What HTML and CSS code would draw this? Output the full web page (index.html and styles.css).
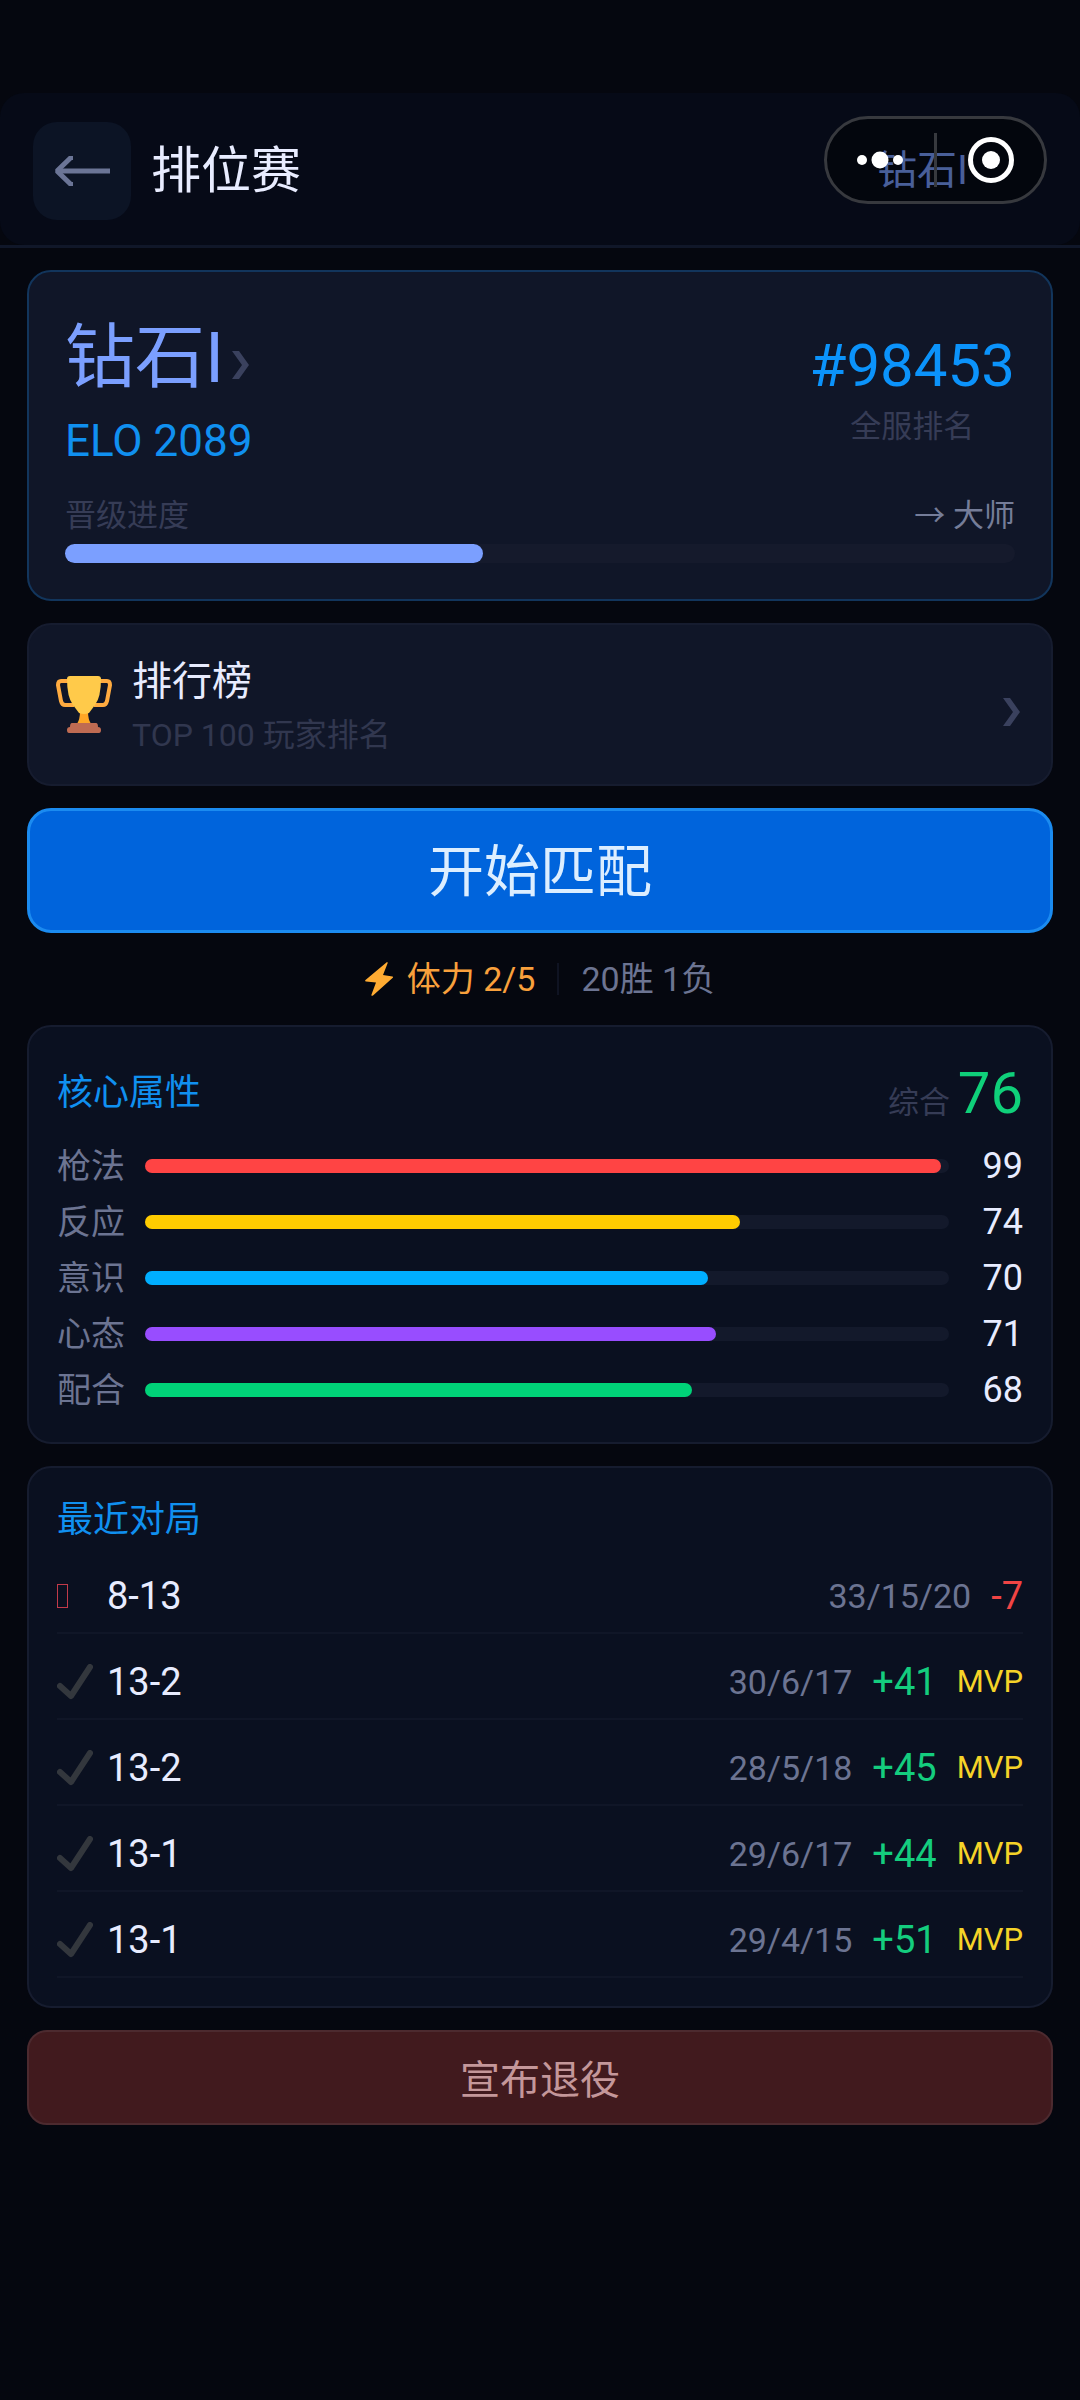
FILE: index.html
```html
<!DOCTYPE html>
<html lang="zh-CN">
<head>
    <meta charset="UTF-8">
    <meta name="viewport" content="width=device-width, initial-scale=1.0">
    <title>排位赛</title>
    <link rel="stylesheet" href="styles.css">
</head>
<body>
    <header class="header">
        <div class="header-inner">
            <button class="back" type="button" aria-label="返回">
                <svg width="58" height="30" viewBox="0 0 58 30" fill="none" stroke="currentColor" stroke-width="5">
                    <path d="M4 15H57"/>
                    <path d="M20 1.5H18L4 15L18 28.5H20" stroke-linejoin="bevel"/>
                </svg>
            </button>
            <h1 class="title">排位赛</h1>
            <span class="header-rank">钻石I</span>
        </div>
        <!-- mini program capsule, floats over the header -->
        <div class="capsule">
            <button type="button" class="capsule-btn" aria-label="更多">
                <svg width="48" height="18" viewBox="0 0 48 18" fill="#fff">
                    <circle cx="5" cy="9" r="5"/>
                    <circle cx="23" cy="9" r="8.5"/>
                    <circle cx="41" cy="9" r="5"/>
                </svg>
            </button>
            <span class="capsule-line"></span>
            <button type="button" class="capsule-btn" aria-label="关闭">
                <svg width="46" height="46" viewBox="0 0 46 46">
                    <circle cx="23" cy="23" r="20.5" fill="none" stroke="#fff" stroke-width="5"/>
                    <circle cx="23" cy="23" r="9" fill="#fff"/>
                </svg>
            </button>
        </div>
    </header>

    <main class="main">
        <section class="card rank-card">
            <div class="rank-top">
                <div>
                    <a href="#" class="rank-name">钻石I
                        <svg class="chevron" width="18" height="28" viewBox="0 0 18 28"><path d="M0 0H7L17 14L7 28H0L10 14Z"/></svg>
                    </a>
                    <div class="elo">ELO 2089</div>
                </div>
                <div class="rank-place">
                    <div class="place-num">#98453</div>
                    <div class="place-label">全服排名</div>
                </div>
            </div>
            <div class="progress-head">
                <span>晋级进度</span>
                <span class="next">→ 大师</span>
            </div>
            <div class="progress"><div class="progress-fill" style="width: 44%"></div></div>
        </section>

        <a href="#" class="card board">
            <svg class="trophy" width="56" height="57" viewBox="0 0 56 57">
                <path d="M13 5H5Q2 5 2 9L5 25Q6 29 9 29H18M43 5H51Q54 5 54 9L51 25Q50 29 47 29H38" fill="none" stroke="#ffab40" stroke-width="4"/>
                <path d="M24 36H32Q32 43 35 48H21Q24 43 24 36Z" fill="#ffa726"/>
                <path d="M14 0H42Q45 0 45 3Q45 21 39 29L33 37Q28 39 23 37L17 29Q11 21 11 3Q11 0 14 0Z" fill="#ffca4a"/>
                <path d="M16 47H40Q42 47 42 51Q45 51 45 54Q45 57 43 57H13Q11 57 11 54Q11 51 14 51Q14 47 16 47Z" fill="#bf6b52"/>
            </svg>
            <div class="board-text">
                <div class="board-title">排行榜</div>
                <div class="board-sub">TOP 100 玩家排名</div>
            </div>
            <svg class="chevron" width="18" height="28" viewBox="0 0 18 28"><path d="M0 0H7L17 14L7 28H0L10 14Z"/></svg>
        </a>

        <button type="button" class="start">开始匹配</button>

        <div class="status">
            <span class="energy">
                <svg width="28" height="34" viewBox="0 0 28 34" fill="#ffab32"><path d="M22 0Q23 0 22.500 1.500L18 13L27.500 14.500Q28.500 15 27.500 16L8 33.500Q6 34.500 6.500 32.500L11 20.500L1 19.500Q-.5 19 .5 18Z"/></svg>
                体力 2/5
            </span>
            <span class="status-line"></span>
            <span class="record">20胜 1负</span>
        </div>

        <section class="card panel">
            <div class="panel-head">
                <h2 class="panel-title">核心属性</h2>
                <div class="overall">综合 <span class="overall-num">76</span></div>
            </div>
            <div class="stats">
                <div class="stat">
                    <span class="stat-name">枪法</span>
                    <div class="bar"><div class="bar-fill red" style="width: 99%"></div></div>
                    <span class="stat-value">99</span>
                </div>
                <div class="stat">
                    <span class="stat-name">反应</span>
                    <div class="bar"><div class="bar-fill yellow" style="width: 74%"></div></div>
                    <span class="stat-value">74</span>
                </div>
                <div class="stat">
                    <span class="stat-name">意识</span>
                    <div class="bar"><div class="bar-fill blue" style="width: 70%"></div></div>
                    <span class="stat-value">70</span>
                </div>
                <div class="stat">
                    <span class="stat-name">心态</span>
                    <div class="bar"><div class="bar-fill purple" style="width: 71%"></div></div>
                    <span class="stat-value">71</span>
                </div>
                <div class="stat">
                    <span class="stat-name">配合</span>
                    <div class="bar"><div class="bar-fill green" style="width: 68%"></div></div>
                    <span class="stat-value">68</span>
                </div>
            </div>
        </section>

        <section class="card panel">
            <h2 class="panel-title matches-title">最近对局</h2>
            <ul class="matches">
                <li class="match">
                    <span class="result"><span class="lose-mark"></span></span>
                    <span class="score">8-13</span>
                    <span class="kda">33/15/20</span>
                    <span class="delta down">-7</span>
                </li>
                <li class="match">
                    <span class="result"><svg width="36" height="36" viewBox="0 0 36 36"><path class="win-mark" d="M3 22L14 32L33 3"/></svg></span>
                    <span class="score">13-2</span>
                    <span class="kda">30/6/17</span>
                    <span class="delta up">+41</span>
                    <span class="mvp">MVP</span>
                </li>
                <li class="match">
                    <span class="result"><svg width="36" height="36" viewBox="0 0 36 36"><path class="win-mark" d="M3 22L14 32L33 3"/></svg></span>
                    <span class="score">13-2</span>
                    <span class="kda">28/5/18</span>
                    <span class="delta up">+45</span>
                    <span class="mvp">MVP</span>
                </li>
                <li class="match">
                    <span class="result"><svg width="36" height="36" viewBox="0 0 36 36"><path class="win-mark" d="M3 22L14 32L33 3"/></svg></span>
                    <span class="score">13-1</span>
                    <span class="kda">29/6/17</span>
                    <span class="delta up">+44</span>
                    <span class="mvp">MVP</span>
                </li>
                <li class="match">
                    <span class="result"><svg width="36" height="36" viewBox="0 0 36 36"><path class="win-mark" d="M3 22L14 32L33 3"/></svg></span>
                    <span class="score">13-1</span>
                    <span class="kda">29/4/15</span>
                    <span class="delta up">+51</span>
                    <span class="mvp">MVP</span>
                </li>
            </ul>
        </section>

        <button type="button" class="retire">宣布退役</button>
    </main>
</body>
</html>
```

FILE: styles.css
```css
* {
    box-sizing: border-box;
}

body {
    margin: 0;
    padding-top: 93px;
    min-height: 100vh;
    background-color: #05070f;
    color: #e8ecff;
    font-family: Roboto, "Noto Sans CJK SC", sans-serif;
    font-size: 34px;
    line-height: 48px;
}

a {
    color: inherit;
    text-decoration: none;
}

button {
    font-family: inherit;
    cursor: pointer;
}

svg {
    display: block;
    flex-shrink: 0;
}

h1,
h2 {
    margin: 0;
    font-weight: 400;
}

/* Header */
.header {
    border-bottom: 3px solid #101729;
}

.header-inner {
    display: flex;
    align-items: center;
    gap: 20px;
    padding: 29px 112px 25px 33px;
    background-color: #060a17;
    border-radius: 24px;
}

.back {
    display: flex;
    align-items: center;
    justify-content: center;
    width: 98px;
    height: 98px;
    padding: 0;
    border: none;
    border-radius: 24px;
    background-color: #0c1425;
    color: #6b7596;
}

.title {
    flex: 1;
    font-size: 50px;
    line-height: 50px;
}

.header-rank {
    font-size: 40px;
    line-height: 50px;
    color: #7b9fff;
}

.capsule {
    position: absolute;
    top: 116px;
    right: 33px;
    display: flex;
    align-items: center;
    width: 223px;
    height: 88px;
    border: 3px solid #37393e;
    border-radius: 44px;
    background-color: rgba(0, 0, 0, 0.4);
}

.capsule-btn {
    flex: 1;
    display: flex;
    align-items: center;
    justify-content: center;
    height: 100%;
    padding: 0;
    border: none;
    background: none;
}

.capsule-line {
    width: 3px;
    height: 54px;
    background-color: #37393e;
}

/* Cards */
.main {
    display: flex;
    flex-direction: column;
    gap: 22px;
    padding: 22px 27px;
}

.card {
    border: 2px solid #161c2f;
    border-radius: 24px;
    background-color: #101628;
}

.chevron {
    margin-top: 14px;
    fill: #3a415e;
}

.rank-card {
    padding: 36px;
    border-color: #12355c;
}

.rank-top {
    display: flex;
    justify-content: space-between;
    align-items: center;
}

.rank-name {
    display: flex;
    align-items: center;
    gap: 8px;
    font-size: 70px;
    line-height: 100px;
    color: #7b9fff;
}

.elo {
    font-size: 44px;
    line-height: 66px;
    color: #1090f0;
}

.rank-place {
    text-align: center;
}

.place-num {
    font-size: 60px;
    line-height: 72px;
    color: #0b93fb;
}

.place-label {
    font-size: 31px;
    line-height: 50px;
    color: #363c56;
}

.progress-head {
    display: flex;
    justify-content: space-between;
    margin: 20px 0 6px;
    font-size: 31px;
    line-height: 44px;
    color: #363c56;
}

.next {
    color: #757d99;
}

.progress {
    height: 19px;
    border-radius: 10px;
    background-color: #151a2c;
}

.progress-fill {
    height: 100%;
    border-radius: 10px;
    background-color: #7b9fff;
}

/* Leaderboard entry */
.board {
    display: flex;
    align-items: center;
    gap: 20px;
    padding: 24px 30px 24px 27px;
}

.board-text {
    flex: 1;
    padding-top: 5px;
}

.board-title {
    font-size: 40px;
    line-height: 56px;
}

.board-sub {
    font-size: 32px;
    line-height: 50px;
    color: #31374f;
}

.start {
    height: 125px;
    padding: 0 0 8px;
    border: 3px solid #1b8bf0;
    border-radius: 24px;
    background-color: #0064dc;
    color: #dceeff;
    font-size: 56px;
}

.status {
    display: flex;
    justify-content: center;
    align-items: center;
    gap: 22px;
}

.energy {
    display: flex;
    align-items: center;
    gap: 14px;
    color: #f9a03c;
}

.status-line {
    width: 2px;
    height: 32px;
    background-color: #0f1322;
}

.record {
    color: #6c7492;
}

/* Panels */
.panel {
    padding: 28px;
    background-color: #0a1020;
}

.panel-head {
    display: flex;
    justify-content: space-between;
    align-items: center;
    margin-bottom: 11px;
}

.panel-title {
    font-size: 36px;
    color: #1090f0;
}

.overall {
    font-size: 31px;
    color: #363c56;
}

.overall-num {
    font-size: 58px;
    line-height: 76px;
    color: #0fd07a;
}

.stats {
    display: flex;
    flex-direction: column;
    gap: 8px;
}

.stat {
    display: grid;
    grid-template-columns: 68px 1fr 54px;
    align-items: center;
    gap: 20px;
}

.stat-name {
    color: #6c7492;
}

.stat-value {
    font-size: 36px;
    text-align: right;
}

.bar {
    height: 14px;
    border-radius: 7px;
    background-color: #13192b;
}

.bar-fill {
    height: 100%;
    border-radius: 7px;
}

.red {
    background-color: #ff4444;
}

.yellow {
    background-color: #ffcc00;
}

.blue {
    background-color: #00aeff;
}

.purple {
    background-color: #984dff;
}

.green {
    background-color: #00d278;
}

/* Recent matches */
.matches-title {
    margin-bottom: 16px;
}

.matches {
    display: flex;
    flex-direction: column;
    gap: 12px;
    margin: 0;
    padding: 0;
    list-style: none;
}

.match {
    display: flex;
    align-items: center;
    gap: 20px;
    padding: 12px 0;
    border-bottom: 2px solid #101627;
}

.result {
    width: 30px;
}

.lose-mark {
    display: block;
    width: 11px;
    height: 24px;
    border: 1px solid #c23a4a;
}

.win-mark {
    fill: none;
    stroke: #33373d;
    stroke-width: 6;
    stroke-linecap: round;
    stroke-linejoin: round;
}

.score {
    flex: 1;
    font-size: 38px;
}

.kda {
    color: #6c7492;
}

.delta {
    font-size: 38px;
}

.up {
    color: #14cd7e;
}

.down {
    color: #f04444;
}

.mvp {
    font-size: 31px;
    color: #f5d328;
}

.retire {
    height: 95px;
    padding: 0 0 2px;
    border: 2px solid #4c2a2f;
    border-radius: 20px;
    background-color: #411a1e;
    color: #c4979a;
    font-size: 40px;
}
```
